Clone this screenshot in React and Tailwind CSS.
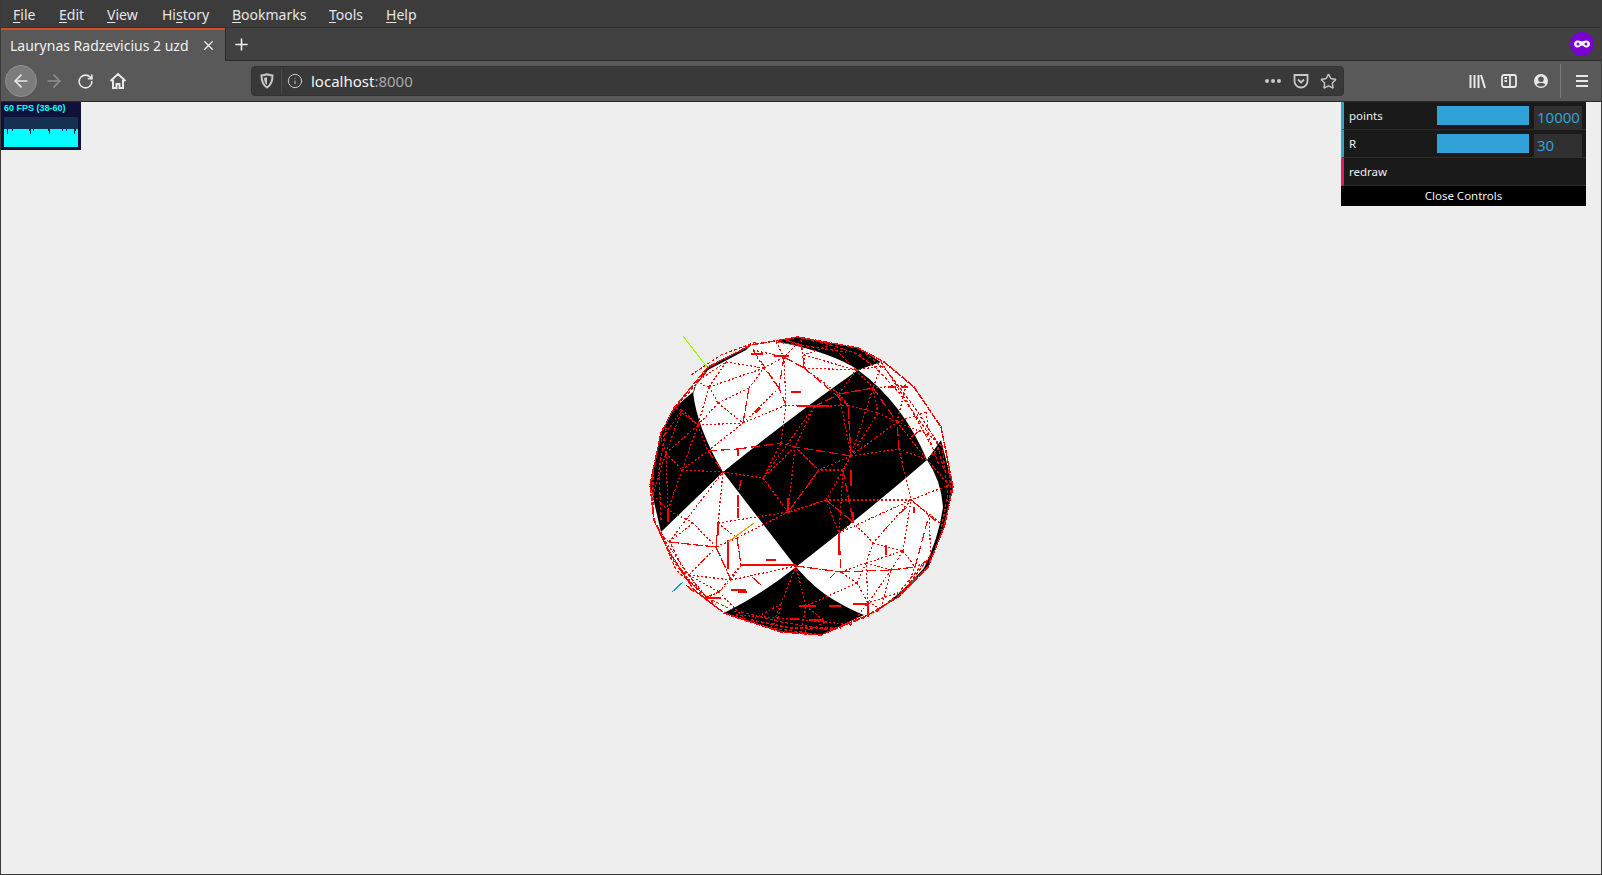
import React from 'react';
import { ArrowLeft, ArrowRight, RotateCw, Info, Star, X, Plus } from 'lucide-react';

const MENU = [
  { pre: '', u: 'F', post: 'ile', w: 'w-[46px]' },
  { pre: '', u: 'E', post: 'dit', w: 'w-[48px]' },
  { pre: '', u: 'V', post: 'iew', w: 'w-[55px]' },
  { pre: 'Hi', u: 's', post: 'tory', w: 'w-[70px]' },
  { pre: '', u: 'B', post: 'ookmarks', w: 'w-[97px]' },
  { pre: '', u: 'T', post: 'ools', w: 'w-[57px]' },
  { pre: '', u: 'H', post: 'elp', w: 'w-[50px]' },
];

// mesh vertices, in page coordinates
const N = {
  A: [708, 387], B: [717, 403], C: [742, 423], D: [748, 388], E: [763, 368], F: [778, 388], G: [783, 357], H: [785, 405],
  I: [707, 451], J: [737, 449], K: [697, 425], L: [665, 453], M: [681, 470], O: [681, 410], P: [780, 443], Q: [762, 478],
  R: [855, 370], S: [872, 388], T: [838, 394], U: [847, 405], V: [877, 413], W: [896, 422], X: [850, 456], Y: [813, 407],
  Z: [898, 449], a: [794, 447], b: [818, 470], c: [842, 470], d: [803, 368], e: [803, 355], f: [926, 460], g: [928, 435],
  i: [717, 523], j: [715, 547], k: [688, 575], l: [730, 580], m: [718, 592], n: [703, 598], o: [667, 510], p: [692, 523],
  q: [795, 566], r: [740, 565], s: [736, 538], t: [668, 542], u: [780, 604], v: [777, 618], w: [747, 622], x: [787, 512],
  y: [825, 500], z: [838, 533], aa: [852, 522], ab: [910, 500], ac: [928, 515], ad: [902, 551], ae: [872, 543], af: [865, 563],
  ag: [890, 570], ah: [867, 603], ai: [856, 583], aj: [840, 572], ak: [914, 567], al: [805, 606], am: [825, 622], an: [937, 523],
  ao: [790, 512], ap: [722, 472], aq: [660, 532],
  // vertices close to the rim
  r1: [725, 362], r2: [752, 350], r3: [775, 342], r4: [800, 340], r5: [830, 345], r6: [880, 366], r7: [905, 385], r8: [925, 412], r9: [940, 445],
  r10: [948, 485], r11: [942, 525], r12: [930, 560], r13: [905, 590], r14: [880, 608], r15: [850, 625], r16: [800, 633], r17: [770, 628], r18: [735, 615],
  r19: [705, 598], r20: [680, 570], r21: [660, 535], r22: [652, 495], r23: [660, 440], r24: [675, 408], r25: [695, 382],
};

const DOTTED = 'A-B B-C C-D B-D D-E E-F F-C C-H E-G A-K K-I I-C B-K K-C A-E L-M M-I L-O O-K L-K K-M L-o M-o M-ap ap-Q Q-P P-H P-a Q-x x-a a-b x-b x-ao ao-y y-z y-X X-b X-T X-S X-V X-Z X-W T-S S-V V-W U-T U-V U-X U-Y Y-a Y-Q T-R R-S W-g W-f Z-f y-aa aa-z aa-ae z-ab ae-ad ad-ab ab-ac ab-ae ae-af af-ag af-ad ag-ad ag-ak ad-ak af-aj af-ai ai-ah ah-af ag-ah ai-aj aj-q ai-al al-q al-am u-v u-q u-w v-am i-j i-s j-l j-p j-k p-o p-t t-j t-ap i-ap j-ap l-m l-k m-n k-n k-m l-r r-s s-x s-j q-r r-m x-Q '
  + 'r1-A r1-E r2-E r2-G r3-G r4-G r4-d d-G d-R d-e e-R r5-R r5-e r6-R r6-S r7-S r7-W r8-W r8-g r9-g r9-f r10-f r10-ab r11-ab r11-ac r12-ak r12-ac r13-ak r13-ah r14-ah r14-ag r15-ah r15-am r16-am r16-al r17-u r17-v r18-v r18-w r19-n r19-m r20-k r20-n r21-t r21-k r22-o r22-L r23-L r23-O r24-O r24-K r25-A r25-r1 '
  + 'X-c c-b b-a a-Q G-H d-T Y-H y-x y-c c-z Z-ab Z-f Z-ab ab-y i-x l-q m-w';
const DASHED = 'I-J J-P C-D H-F G-F X-U Y-T T-S Z-W S-W X-a I-ap z-aj q-aj aj-ag ag-ak ak-ac ac-an j-t s-r l-j n-m r2-F d-G d-U b-x c-aa y-aa';
const SOLID = [
  [796, 406, 828, 406], [740, 565, 795, 565], [737, 508, 737, 518], [717, 523, 717, 535], [751, 577, 760, 585], [700, 563, 703, 559],
  [838, 533, 838, 555], [852, 512, 852, 522], [852, 604, 866, 604], [867, 603, 867, 617], [883, 530, 889, 524], [898, 514, 906, 507],
  [913, 507, 913, 513], [798, 606, 815, 606], [828, 606, 840, 606], [790, 619, 798, 619], [808, 620, 823, 620], [750, 354, 762, 354],
  [773, 356, 788, 356], [753, 412, 759, 407], [754, 413, 760, 408], [737, 449, 737, 456], [887, 387, 895, 387], [900, 387, 907, 387],
  [703, 598, 720, 598], [737, 592, 746, 592], [685, 585, 693, 592], [667, 510, 667, 522], [829, 578, 834, 573], [727, 569, 727, 540],
  [730, 590, 745, 590], [785, 340, 800, 345], [740, 480, 738, 490], [765, 560, 775, 560], [796, 343, 802, 348], [737, 495, 737, 507],
  [850, 470, 850, 486], [787, 498, 787, 510], [790, 392, 800, 392], [910, 437, 920, 430], [885, 545, 885, 555],
];

const RIM = '649,485 660,433 673,408 692,385 707,367 750,345 797,337 857,348 883,362 913,387 940,427 952,487 943,527 927,567 897,597 867,615 820,635 780,632 723,613 693,590 667,550 653,520';

// second and third passes near the rim, where the far side of the mesh bunches up
const RIM_DOTS = [
  '860,350 885,370 912,405 935,440 943,470',
  '857,355 875,368 900,395 925,430 938,465',
  '880,362 905,400 930,445',
  '660,532 672,560 695,592 722,612',
  '668,540 680,565 705,597 735,612',
  '656,525 675,570 715,605',
  '690,375 720,355 755,342',
  '800,338 830,345 860,355',
  '775,342 805,346 845,352',
  '660,433 652,470 652,510',
  '665,428 658,470 660,520',
  '730,616 770,628 815,634',
  '740,612 780,622 830,630 865,617',
  '750,620 790,628 840,628',
  '945,450 950,490 944,525',
  '941,445 947,495 940,530',
  '900,590 925,560',
  '875,612 905,588 930,555',
  '705,372 690,390 672,410',
];

// checker cells
const BLACK = [
  'M722 472 Q790 417 857 370 Q902 403 926 460 Q862 515 795 567 Z',
  'M692 392 Q696 428 722 472 L660 532 L649 485 L660 433 L673 408 Z',
  'M692 395 L695 385 L707 367 L750 345 L745 350 L707 370 L693 388 Z',
  'M777 340 L797 337 L857 348 L880 362 L857 370 Q830 352 777 342 Z',
  'M940 440 L952 487 L943 527 L927 567 L897 597 L867 617 Q900 595 923 568 Q938 537 942 507 Q940 480 926 460 Z',
  'M795 567 Q815 590 833 600 Q850 610 863 615 L820 635 L780 632 L723 613 Q760 595 795 567 Z',
];

const line = (pair) => {
  const [from, to] = pair.split('-');
  return { x1: N[from][0], y1: N[from][1], x2: N[to][0], y2: N[to][1] };
};

function Sphere() {
  return (
    <svg className="absolute left-[630px] top-[218px]" width="340" height="330" viewBox="630 320 340 330">
      <polygon points={RIM} fill="#ffffff" />
      {BLACK.map((d) => <path key={d} d={d} fill="#000000" />)}
      <g stroke="#ff0000" strokeWidth="1.200" fill="none" shapeRendering="crispEdges">
        {DOTTED.split(' ').map((e, i) => <line key={i} {...line(e)} strokeDasharray="2 2" />)}
        {DASHED.split(' ').map((e, i) => <line key={i} {...line(e)} strokeDasharray="9 4" />)}
        {SOLID.map((s, i) => <line key={i} x1={s[0]} y1={s[1]} x2={s[2]} y2={s[3]} />)}
        {RIM_DOTS.map((p) => <polyline key={p} points={p} strokeDasharray="3 2" />)}
        <polygon points={RIM} strokeDasharray="7 1" strokeWidth="1.500" />
      </g>
      <g shapeRendering="crispEdges" strokeWidth="1.200">
        <line x1="682" y1="336" x2="706" y2="367" stroke="#99ff00" />
        <line x1="671" y1="592" x2="682" y2="582" stroke="#0099ff" />
        <line x1="727" y1="542" x2="753" y2="523" stroke="#ff9900" />
      </g>
    </svg>
  );
}

function FpsGraph() {
  const dips = [3, 8, 25, 26, 29, 44, 45, 58, 62, 70, 71];
  return (
    <svg width="74" height="30" viewBox="0 0 74 30" className="block">
      <rect width="74" height="30" fill="#16304f" />
      <rect y="12" width="74" height="18" fill="#00ffff" />
      {dips.map((x, i) => <rect key={x} x={x} y="12" width="1" height={i % 3 === 0 ? 5 : 2} fill="#16304f" />)}
    </svg>
  );
}

function GuiRow({ accent, label, value }) {
  return (
    <div className={`flex h-7 items-center border-b border-[#2c2c2c] border-l-[3px] pl-[5px] pr-[4px] ${accent}`}>
      <span className="w-[88px] text-[#eeeeee]">{label}</span>
      {value && (
        <>
          <div className="h-[19px] w-[92px] self-start mt-1 bg-[#2fa1d6]" />
          <div className="ml-[5px] h-6 w-[48px] self-start mt-1 bg-[#303030] pl-[3px] pt-[1px] text-[15px] leading-5 text-[#2fa1d6]">{value}</div>
        </>
      )}
    </div>
  );
}

export default function App() {
  return (
    <div className="flex h-screen flex-col overflow-hidden border-x border-b border-[#3a3a3a] font-['Noto_Sans',sans-serif]">
      {/* Menu bar */}
      <div className="flex h-[28px] shrink-0 items-center border-b border-[#333333] bg-[#3c3c3c] pl-[12px] pt-[2px] text-[14px] text-[#e6e6e6]">
        {MENU.map((m) => (
          <span key={m.u + m.post} className={m.w}>{m.pre}<u className="underline-offset-2">{m.u}</u>{m.post}</span>
        ))}
      </div>

      {/* Tab strip */}
      <div className="flex h-[33px] shrink-0 items-stretch border-b border-[#2b2b2b] bg-[#414141] text-[#f0f0f0]">
        <div className="flex w-[224px] items-center border-t-2 border-[#e2491a] bg-[#595959] pl-[9px] text-[14px] mb-[-1px]">
          <span className="w-[191px] whitespace-nowrap">Laurynas Radzevicius 2 uzd</span>
          <X size={15} strokeWidth={2} />
        </div>
        <div className="flex w-[30px] items-center justify-center border-l border-[#2b2b2b]">
          <Plus size={19} strokeWidth={2} className="ml-[1px]" />
        </div>
        <div className="flex flex-1 items-center justify-end pr-[7px]">
          <svg width="24" height="24" viewBox="0 0 24 24">
            <circle cx="12" cy="12" r="12" fill="#7a00d4" />
            <path d="M8 8.500c1.800 0 2.800 1 4 1s2.200-1 4-1c2.400 0 4 1.600 4 3.500s-1.600 3.500-3.600 3.500c-2 0-3-2-4.400-2s-2.400 2-4.400 2C5.600 15.500 4 13.900 4 12s1.600-3.500 4-3.500z" fill="#ffffff" />
            <circle cx="8" cy="12" r="1.500" fill="#7a00d4" />
            <circle cx="16" cy="12" r="1.500" fill="#7a00d4" />
          </svg>
        </div>
      </div>

      {/* Navigation bar */}
      <div className="flex h-[41px] shrink-0 items-center border-b border-[#2b2b2b] bg-[#595959] text-[#e8e8e8]">
        <div className="ml-[4px] flex h-8 w-8 items-center justify-center rounded-full border border-[#8f8f8f] bg-[#7c7c7c]">
          <ArrowLeft size={20} strokeWidth={2} />
        </div>
        <ArrowRight size={20} strokeWidth={2} className="ml-[7px] text-[#8e8e8e]" />
        <RotateCw size={17} strokeWidth={2.200} className="ml-[13px]" />
        <svg width="18" height="18" viewBox="0 0 18 18" className="ml-[15px]" fill="none" stroke="currentColor" strokeWidth="2">
          <path d="M1.500 9 9 2l7.500 7M4 8v8h3.500v-4h3v4H14V8" />
        </svg>

        {/* URL bar */}
        <div className="ml-[124px] flex h-[30px] w-[1093px] items-center rounded-[4px] border border-[#333333] bg-[#393939]">
          <svg width="14" height="16" viewBox="0 0 14 16" className="ml-[8px] text-[#c8c8c8]" fill="none" stroke="currentColor" strokeWidth="2">
            <path d="M1.500 2.500C4 2.200 5.500 1.800 7 1.200c1.500.6 3 1 5.500 1.300 0 6-1.200 9.500-5.500 12C2.700 12 1.500 8.500 1.500 2.500z" />
            <path d="M7 4v8c-2-1.500-2.800-3.500-3-7z" fill="currentColor" stroke="none" />
          </svg>
          <div className="ml-[7px] h-[24px] w-px bg-[#4a4a4a]" />
          <Info size={16} strokeWidth={1.500} className="ml-[5px] text-[#c8c8c8]" />
          <span className="ml-[8px] flex-1 pt-[1px] text-[15px] text-[#f5f5f5]">localhost<span className="text-[#a8a8a8]">:8000</span></span>
          <svg width="16" height="4" viewBox="0 0 16 4" className="text-[#c8c8c8]" fill="currentColor">
            <circle cx="2" cy="2" r="2" /><circle cx="8" cy="2" r="2" /><circle cx="14" cy="2" r="2" />
          </svg>
          <svg width="16" height="16" viewBox="0 0 16 16" className="ml-[12px] text-[#c8c8c8]" fill="none" stroke="currentColor" strokeWidth="1.800">
            <path d="M1.500 2h13v6a6.500 6.500 0 0 1-13 0z" />
            <path d="M5 6.500 8 9.500l3-3" />
          </svg>
          <Star size={17} strokeWidth={2} className="ml-[11px] mr-[6px] text-[#c8c8c8]" />
        </div>

        {/* Toolbar icons */}
        <svg width="17" height="16" viewBox="0 0 17 16" className="ml-[125px]" fill="none" stroke="currentColor" strokeWidth="2">
          <path d="M1.500 2v13M5.500 2v13M9.500 2v13M12 2l4 13" />
        </svg>
        <svg width="16" height="16" viewBox="0 0 16 16" className="ml-[15px]" fill="none" stroke="currentColor" strokeWidth="1.800">
          <rect x="1" y="2" width="14" height="12" rx="2" />
          <path d="M9 2v12M3.500 5H6M3.500 8H6" />
        </svg>
        <svg width="16" height="16" viewBox="0 0 16 16" className="ml-[16px]" fill="currentColor">
          <path d="M8 1a7 7 0 1 0 0 14A7 7 0 0 0 8 1zm0 2.500A2.800 2.800 0 1 1 8 9.100 2.800 2.800 0 0 1 8 3.500zm0 10c-1.800 0-3.400-.8-4.400-2.100C4.500 10.300 6.200 10 8 10s3.500.3 4.400 1.400c-1 1.300-2.600 2.100-4.400 2.100z" />
        </svg>
        <div className="ml-[11px] h-[34px] w-px bg-[#7a7a7a]" />
        <svg width="14" height="12" viewBox="0 0 14 12" className="ml-[14px]" fill="none" stroke="currentColor" strokeWidth="2">
          <path d="M1 1h12M1 6h12M1 11h12" />
        </svg>
      </div>

      {/* Page */}
      <div className="relative flex-1 bg-[#eeeeee]">
        <div className="absolute left-0 top-0 h-[48px] w-[80px] bg-[#10103a] pl-[3px]">
          <div className="h-[15px] whitespace-nowrap pt-[1px] font-['Liberation_Sans',sans-serif] text-[9px] font-bold leading-[11px] text-[#00ffff]">60 FPS (38-60)</div>
          <FpsGraph />
        </div>

        <div className="absolute left-[1340px] top-0 w-[245px] bg-[#1a1a1a] text-[11.500px] leading-none">
          <GuiRow accent="border-l-[#2fa1d6]" label="points" value="10000" />
          <GuiRow accent="border-l-[#2fa1d6]" label="R" value="30" />
          <GuiRow accent="border-l-[#e61d5f]" label="redraw" />
          <div className="flex h-[20px] items-center justify-center bg-black text-[#eeeeee]">Close Controls</div>
        </div>

        <Sphere />
      </div>
    </div>
  );
}
